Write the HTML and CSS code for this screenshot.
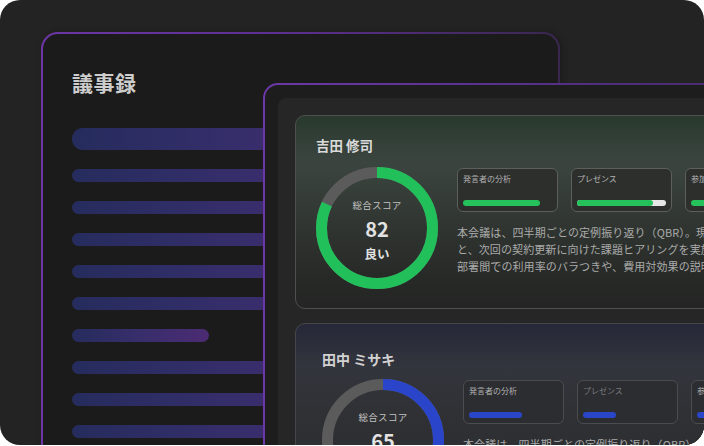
FILE: index.html
```html
<!DOCTYPE html>
<html lang="ja">
<head>
<meta charset="utf-8">
<title>議事録</title>
<link rel="stylesheet" href="styles.css">
</head>
<body>
<div class="frame">
  <div class="doc-window">
    <h1 class="doc-title">議事録</h1>
    <div class="doc-lines">
      <div class="line line-thick"></div>
      <div class="line"></div>
      <div class="line"></div>
      <div class="line"></div>
      <div class="line"></div>
      <div class="line"></div>
      <div class="line line-short"></div>
      <div class="line"></div>
      <div class="line"></div>
      <div class="line"></div>
    </div>
  </div>

  <div class="app-window">
    <div class="panel">
      <div class="card card-green">
        <div class="name">吉田 修司</div>
        <div class="card-body">
          <div class="donut">
            <svg class="donut-svg" viewBox="0 0 122 122" width="122" height="122">
              <circle cx="61" cy="61" r="55.5" fill="none" stroke="#5b5b5b" stroke-width="11"/>
              <circle cx="61" cy="61" r="55.5" fill="none" stroke="#22c05a" stroke-width="11" stroke-dasharray="285.9 400" transform="rotate(-90 61 61)"/>
            </svg>
            <div class="donut-text">
              <span class="donut-label">総合スコア</span>
              <span class="donut-score">82</span>
              <span class="donut-grade">良い</span>
            </div>
          </div>
          <div class="details">
            <div class="metrics">
              <div class="metric">
                <span class="metric-label">発言者の分析</span>
                <div class="track"><div class="fill fill-green" style="width:86%"></div></div>
              </div>
              <div class="metric">
                <span class="metric-label">プレゼンス</span>
                <div class="track track-light"><div class="fill fill-green" style="width:85%"></div></div>
              </div>
              <div class="metric">
                <span class="metric-label">参加度</span>
                <div class="track"><div class="fill fill-green" style="width:80%"></div></div>
              </div>
            </div>
            <p class="summary">本会議は、四半期ごとの定例振り返り（QBR）。現場の運用状況の共有<br>と、次回の契約更新に向けた課題ヒアリングを実施しました。<br>部署間での利用率のバラつきや、費用対効果の説明が求められました。</p>
          </div>
        </div>
      </div>

      <div class="card card-blue">
        <div class="name">田中 ミサキ</div>
        <div class="card-body">
          <div class="donut">
            <svg class="donut-svg" viewBox="0 0 122 122" width="122" height="122">
              <circle cx="61" cy="61" r="55.5" fill="none" stroke="#5b5b5b" stroke-width="11"/>
              <circle cx="61" cy="61" r="55.5" fill="none" stroke="#2a45c9" stroke-width="11" stroke-dasharray="226.7 400" transform="rotate(-90 61 61)"/>
            </svg>
            <div class="donut-text">
              <span class="donut-label">総合スコア</span>
              <span class="donut-score">65</span>
              <span class="donut-grade">普通</span>
            </div>
          </div>
          <div class="details">
            <div class="metrics">
              <div class="metric">
                <span class="metric-label">発言者の分析</span>
                <div class="track"><div class="fill fill-blue" style="width:60%"></div></div>
              </div>
              <div class="metric">
                <span class="metric-label metric-label-dim">プレゼンス</span>
                <div class="track"><div class="fill fill-blue" style="width:37%"></div></div>
              </div>
              <div class="metric">
                <span class="metric-label">参加度</span>
                <div class="track"><div class="fill fill-blue" style="width:50%"></div></div>
              </div>
            </div>
            <p class="summary">本会議は、四半期ごとの定例振り返り（QBR）。現場の運用状況の共有<br>と、次回の契約更新に向けた課題ヒアリングを実施しました。</p>
          </div>
        </div>
      </div>
    </div>
  </div>
</div>
</body>
</html>
```

FILE: styles.css
```css
* {
  box-sizing: border-box;
}

html, body {
  margin: 0;
  padding: 0;
  background: #ffffff;
}

body {
  width: 704px;
  height: 446px;
  overflow: hidden;
  font-family: "Noto Sans CJK JP", "Noto Sans", sans-serif;
}

.frame {
  position: relative;
  width: 704px;
  height: 445px;
  background: #232323;
  border-radius: 20px;
  overflow: hidden;
}

/* Back document window */
.doc-window {
  position: absolute;
  left: 41px;
  top: 32px;
  width: 519px;
  height: 460px;
  border: 2px solid transparent;
  border-radius: 17px;
  background:
    linear-gradient(#1b1b1b, #1b1b1b) padding-box,
    linear-gradient(90deg, #6c36a6 0%, #5e2f92 45%, #3a2750 100%) border-box;
  padding: 35px 0 0 29px;
  box-shadow: 2px 0 6px rgba(0, 0, 0, 0.25);
}

.doc-title {
  margin: 0;
  font-size: 21px;
  line-height: 26px;
  font-weight: 700;
  color: #cdcdcd;
  letter-spacing: 0.5px;
}

.doc-lines {
  margin-top: 33px;
  display: flex;
  flex-direction: column;
  gap: 19px;
}

.line {
  width: 458px;
  height: 13px;
  border-radius: 7px;
  background: linear-gradient(90deg, #262c5d 0%, #352e6b 35%, #472b71 60%, #4c2b73 100%);
}

.line-thick {
  height: 22px;
  border-radius: 11px;
}

.line-short {
  width: 137px;
  background: linear-gradient(90deg, #262c5d 0%, #382e6c 50%, #4c2b73 100%);
}

/* Front app window */
.app-window {
  position: absolute;
  left: 263px;
  top: 83px;
  width: 520px;
  height: 420px;
  border: 2px solid transparent;
  border-radius: 15px;
  background:
    linear-gradient(#1d1d1d, #1d1d1d) padding-box,
    linear-gradient(90deg, #6c38a8 0%, #56308a 50%, #432a66 100%) border-box;
  padding: 13px;
}

.panel {
  height: 100%;
  background: #262626;
  border-radius: 8px;
  padding: 17px;
  display: flex;
  flex-direction: column;
  gap: 14px;
}

.card {
  flex-shrink: 0;
  width: 460px;
  border: 1px solid #4d514d;
  border-radius: 10px;
  overflow: hidden;
}

.card-green {
  height: 194px;
  padding: 20px 0 0 20px;
  background: linear-gradient(180deg, #29392d 0%, #3b4540 24%, #313632 55%, #272927 85%, #242524 100%);
}

.card-blue {
  height: 200px;
  padding: 26px 0 0 26px;
  border-color: #46474c;
  background: linear-gradient(180deg, #262839 0%, #33353d 22%, #2f3033 50%, #2a2b2d 100%);
}

.name {
  font-size: 13.5px;
  line-height: 18px;
  font-weight: 700;
  color: #dadada;
}

.card-blue .name {
  font-size: 14px;
  color: #d2d2d2;
}

.card-body {
  display: flex;
  align-items: flex-start;
  gap: 19px;
  margin-top: 13px;
}

.card-blue .card-body {
  margin-top: 11px;
}

.donut {
  position: relative;
  flex: 0 0 122px;
  width: 122px;
  height: 122px;
}

.donut-svg {
  display: block;
}

.donut-text {
  position: absolute;
  inset: 0;
  display: flex;
  flex-direction: column;
  align-items: center;
  padding-top: 31px;
}

.donut-label {
  font-size: 9.5px;
  line-height: 14px;
  color: #c2c2c2;
  letter-spacing: 0.3px;
}

.donut-score {
  margin-top: 5px;
  font-size: 20px;
  line-height: 24px;
  font-weight: 700;
  color: #e2e2e2;
}

.donut-grade {
  margin-top: 4px;
  font-size: 12.5px;
  line-height: 18px;
  font-weight: 700;
  color: #e2e2e2;
}

.details {
  flex: 0 0 auto;
  margin-top: 1px;
}

.metrics {
  display: flex;
  gap: 13px;
}

.metric {
  flex: 0 0 101px;
  width: 101px;
  height: 44px;
  border: 1px solid #5d5f5d;
  border-radius: 6px;
  background: #2d2f2d;
  padding: 4px 5px 0 5px;
  display: flex;
  flex-direction: column;
}

.card-blue .metric {
  border-color: #4b4c50;
  background: #2c2d30;
}

.metric-label {
  font-size: 8px;
  line-height: 12px;
  color: #b4b4b4;
}

.metric-label-dim {
  color: #7a7a7e;
}

.track {
  margin-top: 15px;
  height: 6px;
  border-radius: 3px;
  width: 100%;
}

.track-light {
  background: #e6e6e6;
}

.fill {
  height: 100%;
  border-radius: 3px;
}

.fill-green {
  background: #25c15b;
}

.fill-blue {
  background: #2a46c8;
}

.summary {
  margin: 12px 0 0 0;
  font-size: 11px;
  line-height: 17px;
  letter-spacing: 0.1px;
  color: #a9aaa9;
  white-space: nowrap;
}
```
